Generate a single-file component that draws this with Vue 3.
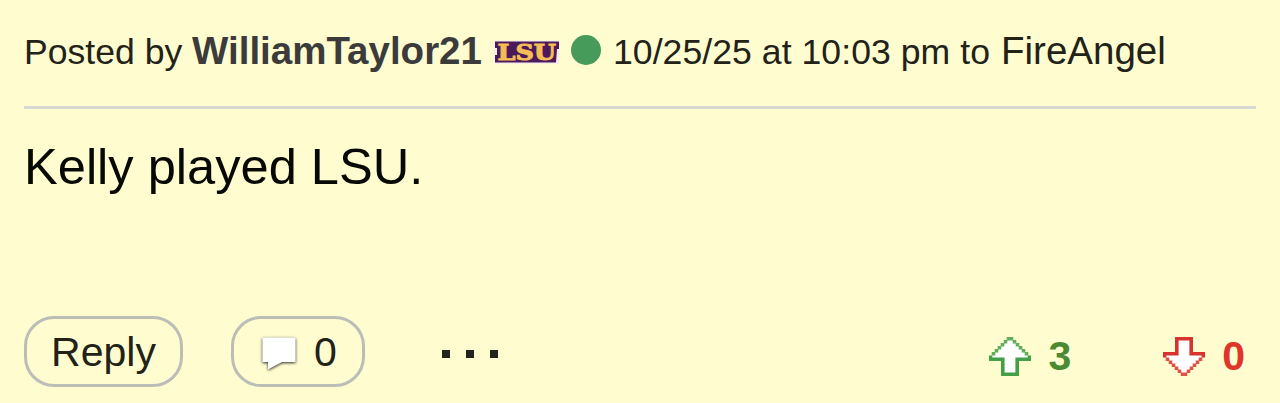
<template>
  <article class="post">
    <header class="post-header">
      <span class="label">Posted by</span>
      <a class="author">{{ post.author }}</a>
      <svg class="team-logo" viewBox="0 0 66 24" role="img">
        <rect x="0" y="0.5" width="65.5" height="23.5" fill="#f7eee8" />
        <path d="M1 1.5H65V9H63L62 22.5H1V15H3V8H1Z" fill="#4a1a5c" />
        <text x="3.5" y="20" textLength="58.5" lengthAdjust="spacingAndGlyphs">LSU</text>
      </svg>
      <span class="status"></span>
      <span class="date">{{ post.date }} to</span>
      <a class="recipient">{{ post.recipient }}</a>
    </header>

    <p class="post-body">{{ post.body }}</p>

    <footer class="post-footer">
      <button class="pill reply">Reply</button>
      <button class="pill comments">
        <svg class="bubble" viewBox="0 0 36 36">
          <path d="M1.5 1.5H34.5V26H21L7 33.5V26H1.5Z" fill="#fff" />
        </svg>
        <span>{{ post.comments }}</span>
      </button>
      <div class="more">
        <i v-for="n in 3" :key="n"></i>
      </div>
      <div class="vote up">
        <svg class="arrow" viewBox="0 0 14 13">
          <path :d="arrowFill" fill="#fff" />
          <path :d="arrowEdge" fill="#43a047" />
          <path :d="arrowSlope" fill="#43a047" fill-opacity="0.85" />
        </svg>
        <span>{{ post.upvotes }}</span>
      </div>
      <div class="vote down">
        <svg class="arrow" viewBox="0 0 14 13">
          <path :d="arrowFill" fill="#fff" />
          <path :d="arrowEdge" fill="#d8342f" />
          <path :d="arrowSlope" fill="#d8342f" fill-opacity="0.85" />
        </svg>
        <span>{{ post.downvotes }}</span>
      </div>
    </footer>
  </article>
</template>

<script setup>
import { ref } from 'vue'

const post = ref({
  author: 'WilliamTaylor21',
  date: '10/25/25 at 10:03 pm',
  recipient: 'FireAngel',
  body: 'Kelly played LSU.',
  comments: 0,
  upvotes: 3,
  downvotes: 0
})

// Pixel arrow on a 14x13 grid, pointing up
const arrowFill = 'M7 0.5L13 6.7V7.5H9.5V12.5H4.5V7.5H1V6.7Z'
const arrowEdge = 'M0 6.2H1.1V6.8H5.2V11.8H8.8V6.8H12.9V6.2H14V8H10V13H4V8H0Z'

// One square per step down both slopes
const arrowSlope = Array.from({ length: 6 }, (_, i) =>
  `M${5.9 - i} ${i}h1.2v1.2h-1.2zM${6.9 + i} ${i}h1.2v1.2h-1.2z`
).join('')
</script>

<style>
body {
  margin: 0;
  background: #fffdd0;
}
</style>

<style scoped>
.post {
  box-sizing: border-box;
  height: 403px;
  padding: 0 24px;
  background: #fffdd0;
  color: #222219;
  font-family: "Liberation Sans", Arial, sans-serif;
}

.post-header {
  display: flex;
  align-items: baseline;
  box-sizing: border-box;
  height: 109px;
  padding-top: 29px;
  border-bottom: 3px solid #d9d7d2;
  font-size: 35.6px;
  line-height: 44px;
  white-space: nowrap;
}

.label {
  width: 168px;
}

.author {
  width: 302px;
  color: #3b3b3b;
  font-size: 38.5px;
  font-weight: bold;
}

.team-logo {
  align-self: flex-start;
  width: 66px;
  height: 24px;
  margin-top: 11px;
  overflow: visible;
}

.team-logo text {
  fill: #f4bd55;
  stroke: #f4bd55;
  stroke-width: 1px;
  font-family: "DejaVu Serif", serif;
  font-size: 22.5px;
  font-weight: bold;
}

.status {
  align-self: flex-start;
  width: 30px;
  height: 30px;
  margin: 6px 0 0 11px;
  border-radius: 50%;
  background: #479b5a;
}

.date {
  width: 388px;
  margin-left: 12px;
  letter-spacing: 0.05px;
}

.recipient {
  font-size: 38.5px;
}

.post-body {
  height: 207px;
  margin: 0;
  padding-top: 28px;
  box-sizing: border-box;
  color: #080805;
  font-size: 50.6px;
  line-height: 60px;
}

.post-footer {
  display: flex;
  align-items: flex-start;
}

.pill {
  display: flex;
  align-items: center;
  justify-content: center;
  box-sizing: border-box;
  height: 71px;
  padding: 0;
  border: 3px solid #bdbdb8;
  border-radius: 30px;
  background: transparent;
  color: #222219;
  font-family: inherit;
  font-size: 41px;
  line-height: 46px;
}

.reply {
  width: 159px;
}

.comments {
  width: 134px;
  margin-left: 48px;
  padding-left: 2px;
  gap: 17px;
}

.bubble {
  width: 36px;
  height: 36px;
  margin-top: 5px;
  filter: drop-shadow(0 1px 1.5px rgba(0, 0, 0, 0.85));
}

.more {
  display: flex;
  gap: 16px;
  margin: 34px 0 0 77px;
}

.more i {
  width: 8px;
  height: 8px;
  background: #24241f;
}

.vote {
  display: flex;
  align-items: center;
  height: 39px;
  margin-top: 21px;
  gap: 17px;
  font-size: 41px;
  font-weight: bold;
  line-height: 39px;
}

.vote.up {
  margin-left: auto;
  color: #4a8a33;
}

.vote.down {
  margin: 21px 11px 0 92px;
  color: #e0352b;
}

.arrow {
  width: 42px;
  height: 39px;
}

.down .arrow {
  transform: scaleY(-1);
}
</style>
